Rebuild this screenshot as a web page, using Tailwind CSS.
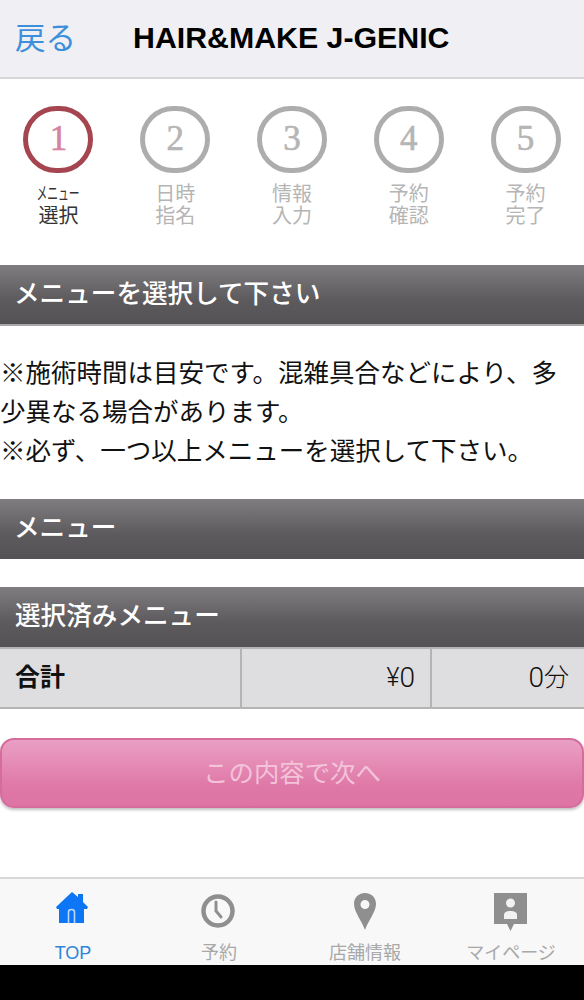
<!DOCTYPE html>
<html lang="ja">
<head>
<meta charset="utf-8">
<title>HAIR&amp;MAKE J-GENIC</title>
<script src="https://cdn.jsdelivr.net/npm/@tailwindcss/browser@4"></script>
</head>
<body class="bg-white font-['Liberation_Sans','Noto_Sans_CJK_JP',sans-serif]">
<div class="w-[584px] h-[1000px] flex flex-col overflow-hidden">

  <!-- header -->
  <header class="h-[79px] shrink-0 bg-[#efeff4] border-b-2 border-[#d6d6d8] flex items-center">
    <a class="ml-[15px] w-[118px] text-[30.5px] leading-none text-[#3d8fdc]" href="#">戻る</a>
    <h1 class="text-[30.3px] leading-none font-bold text-black">HAIR&amp;MAKE J-GENIC</h1>
  </header>

  <!-- steps -->
  <div class="h-[186px] shrink-0 grid grid-cols-5 pt-[27px]">
    <div class="flex flex-col items-center text-[#333]">
      <div class="w-[70px] h-[67px] rounded-full border-[5px] border-[#a5454f] flex items-center justify-center font-['Liberation_Serif',serif] text-[35px] [-webkit-text-stroke:0.6px_currentColor] text-[#d583a3]">1</div>
      <div class="mt-[10px] text-[20px] leading-[22px] text-center"><span class="block text-[18px] scale-x-[0.6]">メニュー</span>選択</div>
    </div>
    <div class="flex flex-col items-center text-[#b5b5b5]">
      <div class="w-[70px] h-[67px] rounded-full border-[5px] border-[#adadad] flex items-center justify-center font-['Liberation_Serif',serif] text-[35px] [-webkit-text-stroke:0.6px_currentColor]">2</div>
      <div class="mt-[10px] text-[20px] leading-[22px] text-center">日時<br>指名</div>
    </div>
    <div class="flex flex-col items-center text-[#b5b5b5]">
      <div class="w-[70px] h-[67px] rounded-full border-[5px] border-[#adadad] flex items-center justify-center font-['Liberation_Serif',serif] text-[35px] [-webkit-text-stroke:0.6px_currentColor]">3</div>
      <div class="mt-[10px] text-[20px] leading-[22px] text-center">情報<br>入力</div>
    </div>
    <div class="flex flex-col items-center text-[#b5b5b5]">
      <div class="w-[70px] h-[67px] rounded-full border-[5px] border-[#adadad] flex items-center justify-center font-['Liberation_Serif',serif] text-[35px] [-webkit-text-stroke:0.6px_currentColor]">4</div>
      <div class="mt-[10px] text-[20px] leading-[22px] text-center">予約<br>確認</div>
    </div>
    <div class="flex flex-col items-center text-[#b5b5b5]">
      <div class="w-[70px] h-[67px] rounded-full border-[5px] border-[#adadad] flex items-center justify-center font-['Liberation_Serif',serif] text-[35px] [-webkit-text-stroke:0.6px_currentColor]">5</div>
      <div class="mt-[10px] text-[20px] leading-[22px] text-center">予約<br>完了</div>
    </div>
  </div>

  <!-- section title -->
  <h2 class="h-[61px] shrink-0 pl-[14px] pb-[1px] flex items-center bg-gradient-to-b from-[#7f7d80] via-[#5c5a5d] via-60% to-[#545255] border-b-2 border-[#a8a8a8] text-[25.6px] font-medium text-white">メニューを選択して下さい</h2>

  <div class="h-[173px] shrink-0 pt-[28px] text-[25.5px] leading-[39px] text-[#111]">
    <p>※施術時間は目安です。混雑具合などにより、多<br>少異なる場合があります。<br>※必ず、一つ以上メニューを選択して下さい。</p>
  </div>

  <h2 class="h-[60px] shrink-0 pl-[14px] pb-[1px] flex items-center bg-gradient-to-b from-[#7f7d80] via-[#5c5a5d] via-60% to-[#545255] text-[25.6px] font-medium text-white">メニュー</h2>

  <h2 class="mt-[28px] h-[60px] shrink-0 pl-[15px] pb-[1px] flex items-center bg-gradient-to-b from-[#7f7d80] via-[#5c5a5d] via-60% to-[#545255] text-[25.6px] font-medium text-white">選択済みメニュー</h2>

  <!-- total row -->
  <div class="h-[62px] shrink-0 flex bg-[#dedddf] border-y-2 border-[#b4b4b4] text-[25px] text-[#111]">
    <div class="w-[242px] px-[15px] flex items-center font-bold border-r-2 border-[#b4b4b4]">合計</div>
    <div class="w-[190px] pr-[15px] flex items-center justify-end border-r-2 border-[#b4b4b4] font-['Roboto','Noto_Sans_CJK_JP',sans-serif] font-light"><span>¥</span><span class="text-[28px] leading-none">0</span></div>
    <div class="flex-1 pr-[15px] flex items-center justify-end font-['Roboto','Noto_Sans_CJK_JP',sans-serif] font-light"><span class="text-[28px] leading-none">0</span><span>分</span></div>
  </div>

  <!-- next button -->
  <div class="mt-[29px] shrink-0">
    <button class="w-full h-[70px] rounded-[14px] border-2 border-[#d56d9c] bg-gradient-to-b from-[#ea9fc4] via-[#df78a7] via-70% to-[#de74a4] shadow-[0_2px_3px_rgba(0,0,0,0.25)] text-[25.4px] text-[#f3c3da]">この内容で次へ</button>
  </div>

  <!-- tab bar -->
  <nav class="mt-[69px] h-[88px] shrink-0 bg-[#f8f8f9] border-t-2 border-[#d9d9db] grid grid-cols-4 text-[18px] leading-none text-[#a8a8a8]">
    <a class="relative flex flex-col items-center text-[#2f85d8]" href="#">
      <svg class="mt-[13px] -ml-[2px] w-[32px] h-[32px]" viewBox="0 0 32 32"><path fill="#0d76f5" d="M16 0 L22 5 V2 H27 V10 L32 15 L31 17 H28 V31 H3 V17 H1 L0 15 Z"/><path fill="none" stroke="#b9d6fb" stroke-width="1.6" d="M12.5 31 V20 Q12.5 17.5 15.5 17.5 Q18.5 17.5 18.5 20 V31"/></svg>
      <span class="absolute top-[65px] left-1/2 -translate-x-1/2">TOP</span>
    </a>
    <a class="relative flex flex-col items-center" href="#">
      <svg class="mt-[14px] mr-[2px] w-[36px] h-[36px]" viewBox="0 0 36 36"><circle cx="18" cy="18" r="14.5" fill="none" stroke="#8f8f8f" stroke-width="4.5"/><path fill="none" stroke="#8f8f8f" stroke-width="3" stroke-linecap="round" d="M16 9 V18 L21 24"/></svg>
      <span class="absolute top-[65px] left-1/2 -translate-x-1/2 whitespace-nowrap">予約</span>
    </a>
    <a class="relative flex flex-col items-center" href="#">
      <svg class="mt-[14px] w-[24px] h-[38px]" viewBox="0 0 24 38"><path fill="#8f8f8f" fill-rule="evenodd" d="M12 0 C19 0 23 5 23 11 C23 19 15 28 12 37 C9 28 1 19 1 11 C1 5 5 0 12 0 Z M12 7 A4.5 4.5 0 1 0 12 16 A4.5 4.5 0 1 0 12 7 Z"/></svg>
      <span class="absolute top-[65px] left-1/2 -translate-x-1/2 whitespace-nowrap">店舗情報</span>
    </a>
    <a class="relative flex flex-col items-center" href="#">
      <svg class="mt-[14px] mr-[2px] w-[33px] h-[39px]" viewBox="0 0 33 39"><path fill="#8f8f8f" d="M0 0 H33 V31 H20 L16.5 38 L13 31 H0 Z"/><circle cx="16.5" cy="10" r="4.5" fill="#f2f2f3"/><path fill="#f2f2f3" d="M10 26 V22 C10 19 13 18 16.5 18 C20 18 23 19 23 22 V26 Z"/></svg>
      <span class="absolute top-[65px] left-1/2 -translate-x-1/2 whitespace-nowrap">マイページ</span>
    </a>
  </nav>

  <div class="flex-1 bg-black"></div>
</div>
</body>
</html>
